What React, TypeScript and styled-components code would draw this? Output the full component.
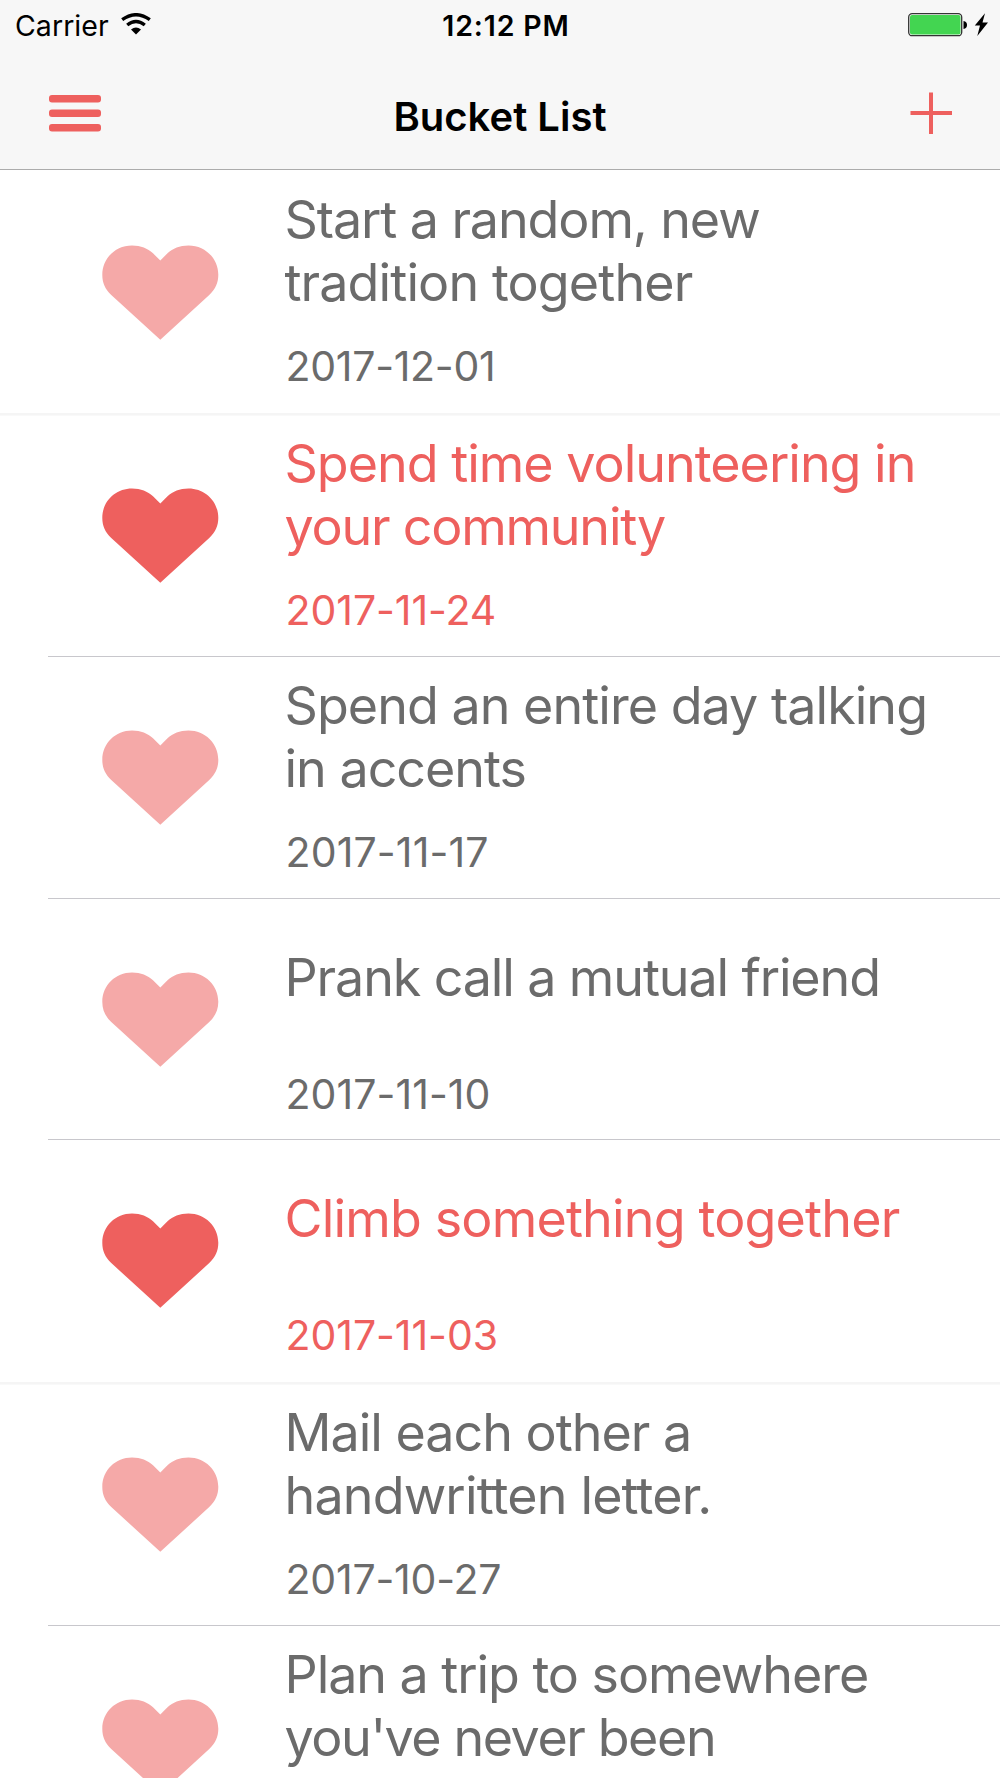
import React from "react";
import styled, { createGlobalStyle } from "styled-components";

const CORAL = "#ee605e";
const GRAY = "#6b6b6b";

const GlobalStyle = createGlobalStyle`
  *, *::before, *::after { box-sizing: border-box; }
  html, body { margin: 0; background: #fff; }
  body { font-family: Inter, "Liberation Sans", sans-serif; overflow: hidden; }
  svg { display: block; flex: none; }
`;

const Screen = styled.div`
  width: 1000px;
  height: 1778px;
  overflow: hidden;
  display: flex;
  flex-direction: column;
  background: #fff;
`;

const Header = styled.header`
  flex: none;
  height: 170px;
  background: #f7f7f7;
  border-bottom: 1px solid #acacac;
`;

const StatusBar = styled.div`
  height: 52px;
  display: grid;
  grid-template-columns: 1fr auto 1fr;
  align-items: center;
  padding: 0 12px 2px 15px;
  color: #000;
`;

const Carrier = styled.div`
  display: flex;
  align-items: flex-start;
  gap: 12px;
  padding-top: 2px;
  font-size: 28.5px;
  line-height: 36px;
  letter-spacing: 0.05px;

  svg {
    margin-top: 5px;
  }
`;

const Clock = styled.time`
  padding: 2px 0 0 9px;
  font-size: 28.5px;
  font-weight: 600;
  line-height: 36px;
  letter-spacing: 0.85px;
`;

const Power = styled.div`
  display: flex;
  justify-content: flex-end;
`;

const NavBar = styled.nav`
  height: 117px;
  display: grid;
  grid-template-columns: 1fr auto 1fr;
  align-items: center;
  padding: 5px 48px 0 48px;
`;

const NavButton = styled.button<{ $end?: boolean }>`
  justify-self: ${(p) => (p.$end ? "end" : "start")};
  padding: ${(p) => (p.$end ? 0 : 1)}px 0 0;
  border: 0;
  background: none;
`;

const NavTitle = styled.h1`
  margin: 0;
  padding-top: 7px;
  font-size: 40px;
  line-height: 50px;
  font-weight: 600;
`;

const List = styled.ul`
  margin: 0;
  padding: 1.5px 0 0;
  list-style: none;
`;

const Item = styled.li<{ $height: number }>`
  height: ${(p) => p.$height}px;
  display: grid;
  grid-template-columns: 284.5px 1fr;
`;

const Divider = styled.li<{ $full?: boolean }>`
  height: ${(p) => (p.$full ? 2 : 1)}px;
  margin-left: ${(p) => (p.$full ? 0 : 48)}px;
  background: ${(p) => (p.$full ? "#f5f5f5" : "#c8c7cc")};
  box-shadow: ${(p) => (p.$full ? "0 1px #f9f9f9" : "none")};
`;

const HeartCell = styled.div`
  padding: 73.4px 0 0 102px;
`;

const Body = styled.div<{ $done?: boolean }>`
  color: ${(p) => (p.$done ? CORAL : GRAY)};
  padding-top: 16.9px;
`;

const Title = styled.div`
  height: 126px;
  display: flex;
  flex-direction: column;
  justify-content: center;
`;

const Line = styled.span<{ $track: number }>`
  font-size: 52px;
  line-height: 63px;
  white-space: nowrap;
  letter-spacing: ${(p) => p.$track}px;

  &:only-child {
    margin-bottom: 2.4px;
  }
`;

const DateText = styled.time<{ $track: number }>`
  display: block;
  margin: 26.8px 0 0 1px;
  font-size: 41px;
  line-height: 50px;
  white-space: nowrap;
  letter-spacing: ${(p) => p.$track}px;
`;

type Entry = {
  lines: [string, number][];
  date?: [string, number];
  done?: boolean;
  height: number;
  fullDivider?: boolean;
};

const entries: Entry[] = [
  { lines: [["Start a random, new", -1.1], ["tradition together", -0.89]], date: ["2017-12-01", -0.28], height: 241.5, fullDivider: true },
  { lines: [["Spend time volunteering in", -1.0], ["your community", -1.22]], date: ["2017-11-24", -0.05], done: true, height: 241 },
  { lines: [["Spend an entire day talking", -0.96], ["in accents", -1.0]], date: ["2017-11-17", 0.15], height: 241 },
  { lines: [["Prank call a mutual friend", -1.12]], date: ["2017-11-10", 0.06], height: 240 },
  { lines: [["Climb something together", -0.83]], date: ["2017-11-03", -0.05], done: true, height: 242, fullDivider: true },
  { lines: [["Mail each other a", -1.0], ["handwritten letter.", -0.84]], date: ["2017-10-27", -0.2], height: 241 },
  { lines: [["Plan a trip to somewhere", -1.06], ["you've never been", -1.42]], height: 152 },
];

const Heart = ({ done }: { done?: boolean }) => (
  <svg width="117" height="95" viewBox="0 0 117 95" fill={done ? CORAL : "#f5a9a8"}>
    <path d="M58.3 94.8 L9 49.8 C3 43.800 .3 37.8 .3 29.8 C.3 13.300 13.5 .5 30 .5 C39 .5 45.500 3.300 51 8.300 L58.300 15.600 L65.500 8.300 C71 3.300 77.500 .5 86.500 .5 C103 .5 116.300 13.300 116.300 29.800 C116.300 37.800 113.500 43.800 107.500 49.800 Z" />
  </svg>
);

const Wifi = () => (
  <svg width="30" height="22" viewBox="0 0 30 22" fill="none" stroke="#000" strokeWidth="3.4">
    <path d="M1.200 6.700 Q15 -3.300 28.800 6.700" />
    <path d="M6.200 12 Q15 5.200 23.800 12" />
    <path d="M10 16.500 Q15 12.500 20 16.500 L15 21.500 Z" fill="#000" stroke="none" />
  </svg>
);

const Battery = () => (
  <svg width="80" height="24" viewBox="0 0 80 24">
    <rect x=".7" y=".7" width="53" height="22" rx="3.500" fill="#f7f7f7" stroke="#333" strokeWidth="1.300" />
    <rect x="2" y="2" width="50.500" height="19.500" rx="2" fill="#43d551" />
    <path d="M55.500 8 Q59 8.500 59 12 Q59 15.500 55.500 16 Z" />
    <path d="M77 .3 L66.800 12.500 H72 L69.300 23 L80 9.500 H74.500 Z" />
  </svg>
);

const Menu = () => (
  <svg width="54" height="38" viewBox="0 0 54 38" fill={CORAL}>
    <rect x="1" y="0" width="52" height="7.500" rx="3" />
    <rect x="1" y="14.500" width="52" height="7.500" rx="3" />
    <rect x="1" y="29" width="52" height="7.500" rx="3" />
  </svg>
);

const Plus = () => (
  <svg width="42" height="42" viewBox="0 0 42 42" fill={CORAL}>
    <rect x=".5" y="19" width="41.500" height="4" />
    <rect x="19" y=".5" width="4" height="41.500" />
  </svg>
);

export default function App() {
  return (
    <Screen>
      <GlobalStyle />
      <Header>
        <StatusBar>
          <Carrier>Carrier <Wifi /></Carrier>
          <Clock>12:12 PM</Clock>
          <Power><Battery /></Power>
        </StatusBar>
        <NavBar>
          <NavButton aria-label="Menu"><Menu /></NavButton>
          <NavTitle>Bucket List</NavTitle>
          <NavButton $end aria-label="Add"><Plus /></NavButton>
        </NavBar>
      </Header>
      <List>
        {entries.map((e, i) => (
          <React.Fragment key={e.lines[0][0]}>
            <Item $height={e.height}>
              <HeartCell><Heart done={e.done} /></HeartCell>
              <Body $done={e.done}>
                <Title>
                  {e.lines.map(([text, track]) => (
                    <Line key={text} $track={track}>{text}</Line>
                  ))}
                </Title>
                {e.date && <DateText $track={e.date[1]}>{e.date[0]}</DateText>}
              </Body>
            </Item>
            {i < entries.length - 1 && <Divider $full={e.fullDivider} />}
          </React.Fragment>
        ))}
      </List>
    </Screen>
  );
}
